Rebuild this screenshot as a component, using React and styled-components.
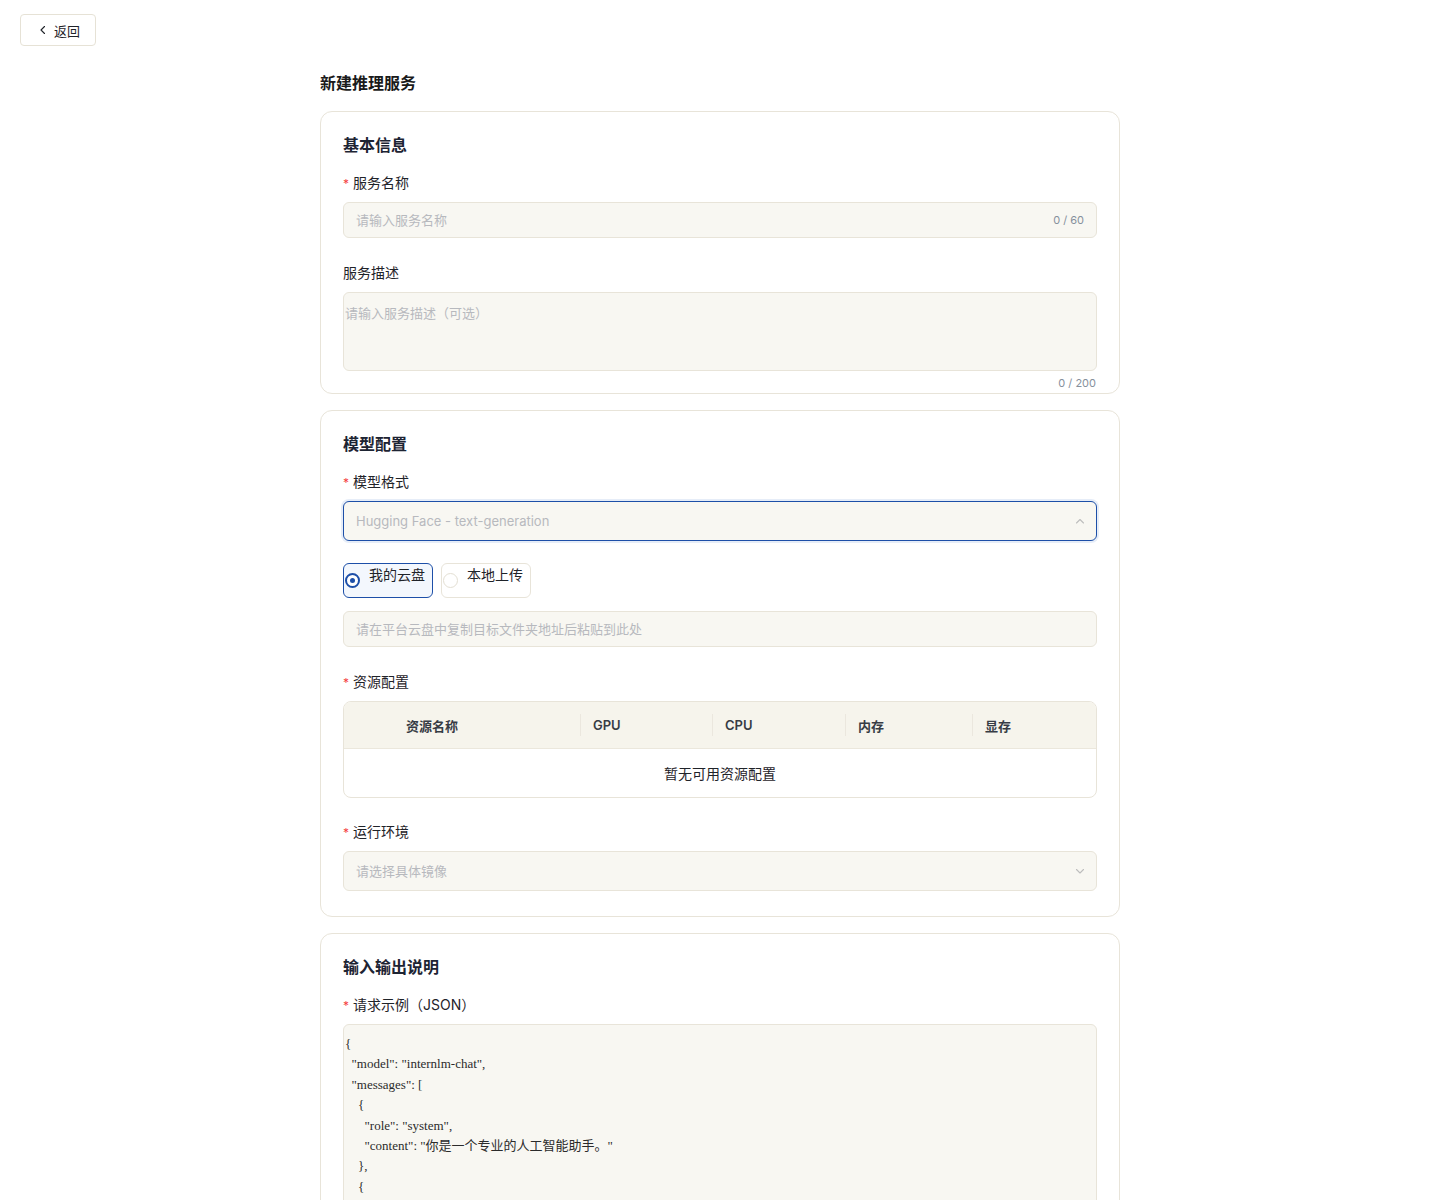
import styled, { createGlobalStyle } from "styled-components";

const GlobalStyle = createGlobalStyle`
  body {
    margin: 0;
    background: #ffffff;
    font-family: Inter, "Noto Sans CJK SC", sans-serif;
    color: #1f2329;
  }
  * { box-sizing: border-box; }
`;

const Page = styled.div`
  padding: 14px 20px 40px;
`;

const BackButton = styled.button`
  display: flex;
  align-items: center;
  gap: 5px;
  width: 76px;
  height: 32px;
  padding: 0 0 0 16px;
  background: #fff;
  border: 1px solid #e6e2d6;
  border-radius: 4px;
  font-family: inherit;
  font-size: 13px;
  color: #1f2329;
  cursor: pointer;
`;

const Main = styled.main`
  width: 800px;
  margin: 25px auto 0;
  display: flex;
  flex-direction: column;
  gap: 16px;
`;

const PageTitle = styled.h1`
  margin: 0;
  height: 24px;
  font-size: 16px;
  line-height: 24px;
  font-weight: 700;
  color: #1a1a1a;
`;

const Card = styled.section`
  border: 1px solid #e8e4d9;
  border-radius: 12px;
  padding: 21px 22px ${(p) => p.$bottom || 22}px;
  display: flex;
  flex-direction: column;
`;

const CardTitle = styled.h2`
  margin: 0 0 15px;
  height: 24px;
  font-size: 16px;
  line-height: 24px;
  font-weight: 600;
  color: #1d2433;
`;

const FormItem = styled.div`
  position: relative;
  margin-bottom: ${(p) => (p.$last ? 0 : p.$gap || 24)}px;
`;

const Label = styled.div`
  height: 22px;
  font-size: 14px;
  line-height: 22px;
  margin-bottom: 8px;
  color: #1f2329;
  &::before {
    content: ${(p) => (p.$required ? '"*"' : '""')};
    color: #f53f3f;
    margin-right: ${(p) => (p.$required ? 4 : 0)}px;
    font-size: 12px;
  }
`;

const InputBox = styled.div`
  display: flex;
  align-items: center;
  height: ${(p) => p.$height || 36}px;
  padding: 0 12px;
  background: #f8f7f2;
  border: 1px solid ${(p) => (p.$focused ? "#1d4fa8" : "#e8e4d9")};
  border-radius: 6px;
  box-shadow: ${(p) => (p.$focused ? "0 0 0 2px #e6edf8" : "none")};
`;

const Input = styled.input`
  flex: 1;
  border: none;
  background: transparent;
  outline: none;
  font-family: inherit;
  font-size: 13px;
  color: #1f2329;
  padding: 0;
  &::placeholder {
    color: #b7b9be;
  }
`;

const Counter = styled.span`
  font-size: 11px;
  color: #86909c;
  margin-left: 8px;
`;

const TextArea = styled.textarea`
  display: block;
  width: 100%;
  height: 79px;
  padding: 10px 1px;
  background: #f8f7f2;
  border: 1px solid #e8e4d9;
  border-radius: 6px;
  resize: none;
  outline: none;
  font-family: inherit;
  font-size: 13px;
  color: #1f2329;
  &::placeholder {
    color: #b7b9be;
  }
`;

const BelowCounter = styled.span`
  position: absolute;
  right: 1px;
  bottom: -19px;
  font-size: 11px;
  color: #86909c;
`;

const RadioGroup = styled.div`
  display: flex;
  gap: 8px;
  margin: 22px 0 13px;
`;

const RadioItem = styled.label`
  display: flex;
  align-items: flex-start;
  gap: 9px;
  height: 35px;
  padding: 1px 7px 0 1px;
  white-space: nowrap;
  border: 1px solid ${(p) => (p.$checked ? "#1d4fa8" : "#e8e4d9")};
  background: ${(p) => (p.$checked ? "#f3f7fd" : "#fff")};
  border-radius: 6px;
  font-size: 14px;
  line-height: 20px;
  color: #1f2329;
  cursor: pointer;
`;

const RadioDot = styled.span`
  flex: none;
  width: 15px;
  height: 15px;
  margin-top: 8px;
  border-radius: 50%;
  border: ${(p) => (p.$checked ? "2px solid #1d4fa8" : "1.5px solid #e3dfd3")};
  background: #fff;
  display: flex;
  align-items: center;
  justify-content: center;
  &::after {
    content: "";
    width: 5px;
    height: 5px;
    border-radius: 50%;
    background: ${(p) => (p.$checked ? "#1d4fa8" : "transparent")};
  }
`;

const Table = styled.div`
  border: 1px solid #e8e4d9;
  border-radius: 8px;
  overflow: hidden;
`;

const HeaderRow = styled.div`
  display: grid;
  grid-template-columns: 48px 188px 132px 133px 127px 1fr;
  height: 47px;
  background: #f6f4ec;
  border-bottom: 1px solid #ebe7dc;
`;

const HeadCell = styled.div`
  position: relative;
  display: flex;
  align-items: center;
  padding-left: ${(p) => (p.$first ? 14 : 13)}px;
  font-size: 13px;
  font-weight: 600;
  color: #373c45;
  &::before {
    content: "";
    display: ${(p) => (p.$divider ? "block" : "none")};
    position: absolute;
    left: 0;
    top: 50%;
    height: 22px;
    margin-top: -11px;
    width: 1px;
    background: #ebe7de;
  }
`;

const EmptyRow = styled.div`
  height: 48px;
  display: flex;
  align-items: center;
  justify-content: center;
  font-size: 14px;
  color: #1f2329;
`;

const Chevron = styled.svg`
  flex: none;
  width: 12px;
  height: 12px;
  color: #bdbdbd;
  margin-right: -2px;
`;

const CodeArea = styled.textarea`
  display: block;
  width: 100%;
  height: 420px;
  padding: 9px 1px;
  background: #f8f7f2;
  border: 1px solid #e8e4d9;
  border-radius: 6px;
  resize: none;
  outline: none;
  font-family: "Liberation Serif", "Noto Sans CJK SC", serif;
  font-size: 13px;
  line-height: 20.4px;
  color: #2b2b2b;
`;

const ChevronIcon = ({ up }) => (
  <Chevron viewBox="0 0 12 12" fill="none">
    <path
      d={up ? "M2.5 8 L6 4.5 L9.5 8" : "M2.5 4.5 L6 8 L9.5 4.5"}
      stroke="currentColor"
      strokeWidth="1.1"
      strokeLinecap="round"
      strokeLinejoin="round"
    />
  </Chevron>
);

const requestExample = `{
  "model": "internlm-chat",
  "messages": [
    {
      "role": "system",
      "content": "你是一个专业的人工智能助手。"
    },
    {
      "role": "user",
      "content": "请介绍一下你自己。"
    }
  ],
  "temperature": 0.7,
  "max_tokens": 1024,
  "stream": false
}`;

const columns = ["资源名称", "GPU", "CPU", "内存", "显存"];

export default function App() {
  return (
    <>
      <GlobalStyle />
      <Page>
        <BackButton>
          <svg width="12" height="12" viewBox="0 0 12 12" fill="none">
            <path d="M7.5 2.5 L4 6 L7.5 9.5" stroke="#1f2329" strokeWidth="1.1" strokeLinecap="round" strokeLinejoin="round" />
          </svg>
          返回
        </BackButton>

        <Main>
          <PageTitle>新建推理服务</PageTitle>

          <Card>
            <CardTitle>基本信息</CardTitle>
            <FormItem>
              <Label $required>服务名称</Label>
              <InputBox>
                <Input placeholder="请输入服务名称" />
                <Counter>0 / 60</Counter>
              </InputBox>
            </FormItem>
            <FormItem $last>
              <Label>服务描述</Label>
              <TextArea placeholder="请输入服务描述（可选）" />
              <BelowCounter>0 / 200</BelowCounter>
            </FormItem>
          </Card>

          <Card $bottom={25}>
            <CardTitle>模型配置</CardTitle>
            <FormItem>
              <Label $required>模型格式</Label>
              <InputBox $height={40} $focused>
                <Input placeholder="Hugging Face - text-generation" readOnly />
                <ChevronIcon up />
              </InputBox>
              <RadioGroup>
                <RadioItem $checked>
                  <RadioDot $checked />
                  我的云盘
                </RadioItem>
                <RadioItem>
                  <RadioDot />
                  本地上传
                </RadioItem>
              </RadioGroup>
              <InputBox>
                <Input placeholder="请在平台云盘中复制目标文件夹地址后粘贴到此处" />
              </InputBox>
            </FormItem>

            <FormItem $gap={23}>
              <Label $required>资源配置</Label>
              <Table>
                <HeaderRow>
                  <HeadCell />
                  {columns.map((c, i) => (
                    <HeadCell key={c} $first={i === 0} $divider={i > 0}>
                      {c}
                    </HeadCell>
                  ))}
                </HeaderRow>
                <EmptyRow>暂无可用资源配置</EmptyRow>
              </Table>
            </FormItem>

            <FormItem $last>
              <Label $required>运行环境</Label>
              <InputBox $height={40}>
                <Input placeholder="请选择具体镜像" readOnly />
                <ChevronIcon />
              </InputBox>
            </FormItem>
          </Card>

          <Card>
            <CardTitle>输入输出说明</CardTitle>
            <FormItem $last>
              <Label $required>请求示例（JSON）</Label>
              <CodeArea defaultValue={requestExample} />
            </FormItem>
          </Card>
        </Main>
      </Page>
    </>
  );
}
